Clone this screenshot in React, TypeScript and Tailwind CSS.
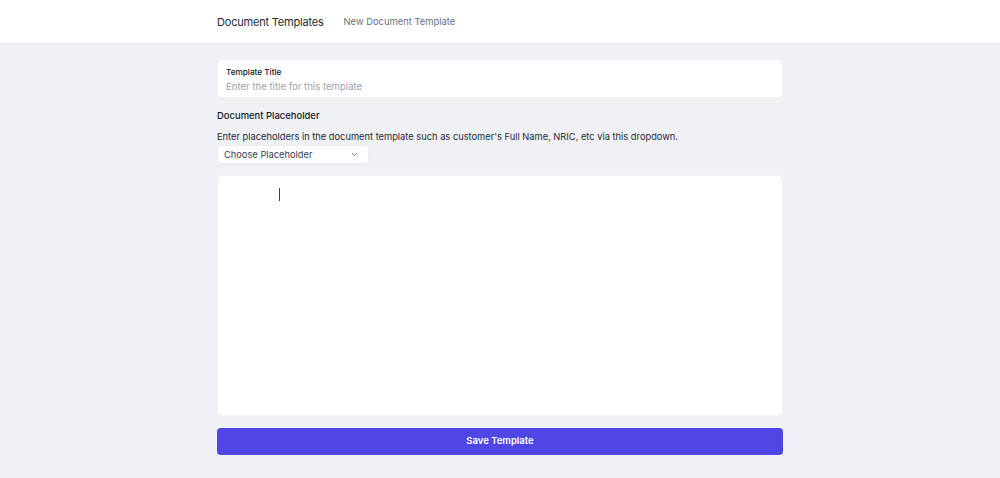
import React from 'react';

export default function App() {
  return (
    <div className="min-h-[478px] bg-[#eff1f4] font-['Inter',sans-serif] text-gray-900">
      <header className="h-[44px] bg-white border-b border-[#e8eaee]">
        <div className="w-[566px] mx-auto h-full flex items-center gap-[20px] pt-[1px]">
          <span className="text-[11px] tracking-[-0.2px] text-[#1f2937]">Document Templates</span>
          <span className="text-[9.4px] text-[#6b7280]">New Document Template</span>
        </div>
      </header>

      <main className="w-[566px] mx-auto pt-[15px]">
        <div className="bg-white rounded-[5px] h-[39px] px-[8px] pt-[6px] border border-[#f2f3f5]">
          <div className="text-[8.2px] leading-[12px] font-medium text-[#111827]">Template Title</div>
          <div className="text-[9.6px] leading-[14px] text-[#9ca3af] mt-[2px]">Enter the title for this template</div>
        </div>

        <div className="mt-[11px] text-[9.45px] leading-[14px] font-medium text-[#111827]">Document Placeholder</div>
        <p className="mt-[7px] text-[9.3px] leading-[14px] text-[#1f2937]">
          Enter placeholders in the document template such as customer's Full Name, NRIC, etc via this dropdown.
        </p>
        <button className="mt-[1px] w-[152px] h-[19px] bg-white rounded-[3px] border border-[#eceef1] flex items-center justify-between pl-[6px] pr-[9px] text-[9.3px] text-[#374151]">
          <span>Choose Placeholder</span>
          <svg width="9" height="9" viewBox="0 0 24 24" fill="none" stroke="#6b7280" strokeWidth="2.5" strokeLinecap="round" strokeLinejoin="round">
            <path d="M6 9l6 6 6-6" />
          </svg>
        </button>

        <div className="mt-[11px] h-[241px] bg-white rounded-[5px] border border-[#f2f3f5] pl-[61px] pt-[12px]">
          <div className="w-px h-[13px] bg-[#374151]" />
        </div>

        <button className="mt-[12px] w-full h-[27px] rounded-[4px] bg-[#4f46e5] text-white text-[9.5px] font-semibold">
          Save Template
        </button>
      </main>
    </div>
  );
}
